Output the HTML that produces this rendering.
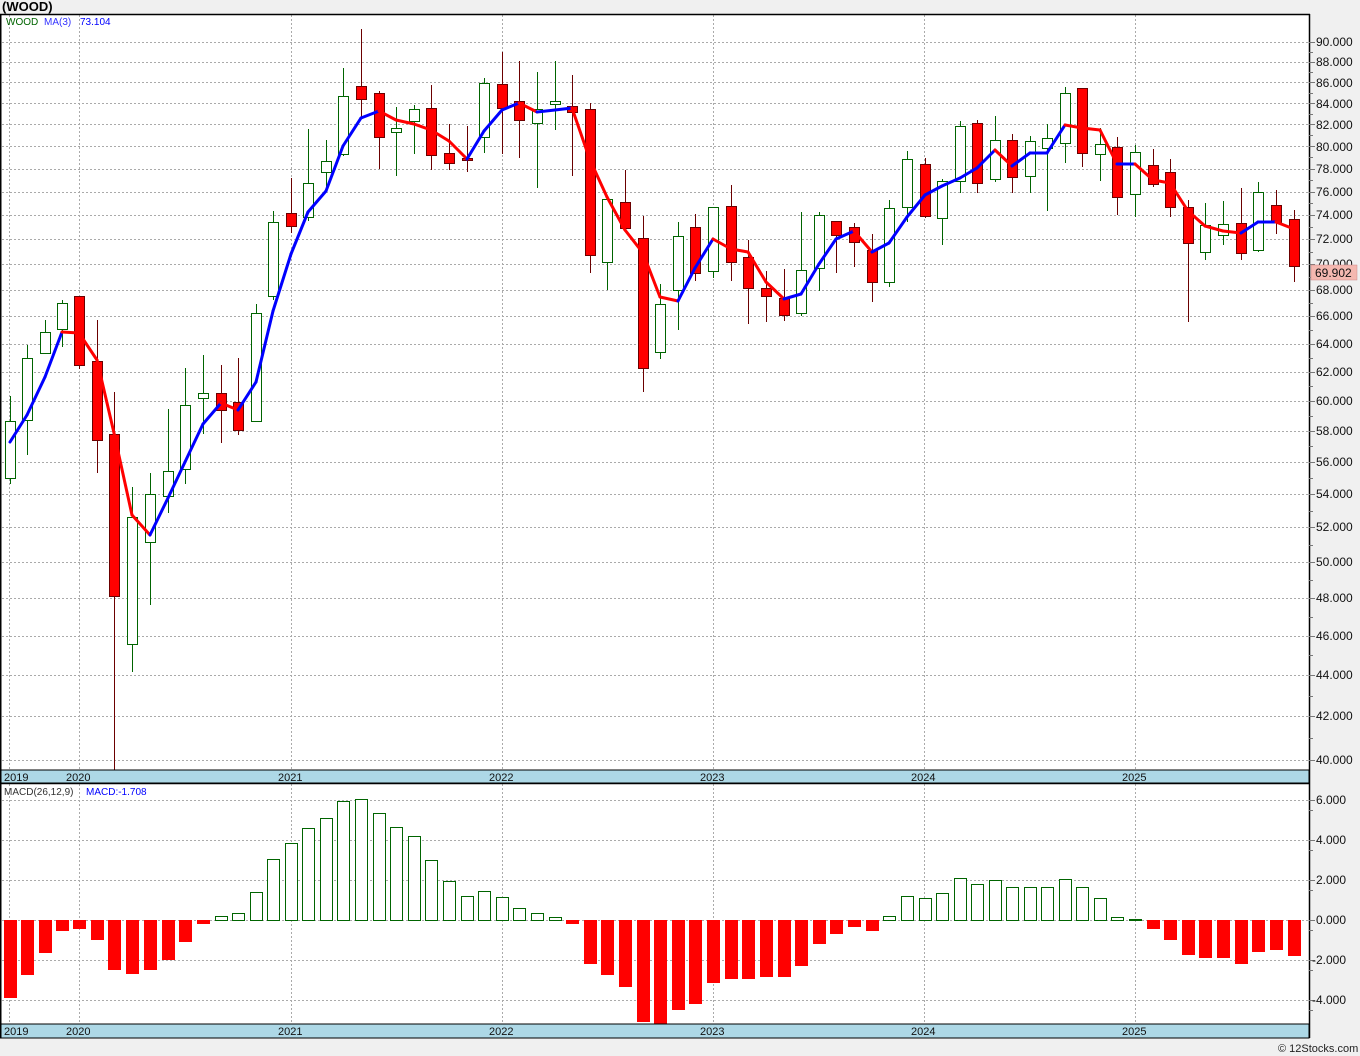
<!DOCTYPE html>
<html><head><meta charset="utf-8"><style>
html,body{margin:0;padding:0;background:#f0f0f0;}
body{width:1360px;height:1056px;position:relative;overflow:hidden;font-family:"Liberation Sans",sans-serif;}
svg{position:absolute;left:0;top:0;}
text{font-family:"Liberation Sans",sans-serif;font-size:12px;}
</style></head><body>
<svg id="s" width="1360" height="1056" xmlns="http://www.w3.org/2000/svg">
<rect x="0" y="14" width="1310" height="1024" fill="#fff"/>
<g id="grid" stroke="#aaa" stroke-dasharray="2,2" stroke-width="1"></g>
<g id="cand"></g>
<g id="ma" fill="none" stroke-width="3" stroke-linecap="round"></g>
<g id="macd"></g>
<rect x="0" y="770" width="1309" height="13" fill="#add8e6" stroke="#000" stroke-width="1"/>
<rect x="0" y="1024" width="1309" height="14" fill="#add8e6" stroke="#000" stroke-width="1"/>
<line x1="0.5" y1="14" x2="0.5" y2="1038" stroke="#000" stroke-width="2"/>
<line x1="0" y1="14.5" x2="1310" y2="14.5" stroke="#000" stroke-width="1.5"/>
<line x1="1309.5" y1="14" x2="1309.5" y2="1038" stroke="#000" stroke-width="1.5"/>
<line x1="0" y1="783.5" x2="1310" y2="783.5" stroke="#000" stroke-width="1.5"/>
<g id="ticks" stroke="#777"></g>
<text x="2" y="11" font-weight="bold" font-size="13" style="font-size:13px">(WOOD)</text>
<text x="6" y="25" fill="#006400" style="font-size:10px">WOOD</text>
<text x="44" y="25" fill="#3333ff" style="font-size:10px">MA(3)</text>
<text x="80" y="25" fill="#0000ff" style="font-size:10px">73.104</text>
<text x="4" y="795" fill="#333" style="font-size:10px">MACD(26,12,9)</text>
<text x="86" y="795" fill="#0000ff" style="font-size:10px">MACD:-1.708</text>
<g fill="#111" style="font-size:11px">
<text x="4" y="781" style="font-size:11px">2019</text><text x="66" y="781" style="font-size:11px">2020</text><text x="278" y="781" style="font-size:11px">2021</text><text x="489" y="781" style="font-size:11px">2022</text><text x="700" y="781" style="font-size:11px">2023</text><text x="911" y="781" style="font-size:11px">2024</text><text x="1122" y="781" style="font-size:11px">2025</text>
<text x="4" y="1035" style="font-size:11px">2019</text><text x="66" y="1035" style="font-size:11px">2020</text><text x="278" y="1035" style="font-size:11px">2021</text><text x="489" y="1035" style="font-size:11px">2022</text><text x="700" y="1035" style="font-size:11px">2023</text><text x="911" y="1035" style="font-size:11px">2024</text><text x="1122" y="1035" style="font-size:11px">2025</text>
</g>
<g id="plabels" fill="#111">
<text x="1316" y="46">90.000</text><text x="1316" y="66">88.000</text><text x="1316" y="87">86.000</text><text x="1316" y="108">84.000</text><text x="1316" y="129">82.000</text><text x="1316" y="151">80.000</text><text x="1316" y="173">78.000</text><text x="1316" y="196">76.000</text><text x="1316" y="219">74.000</text><text x="1316" y="243">72.000</text><text x="1316" y="268">70.000</text><text x="1316" y="294">68.000</text><text x="1316" y="320">66.000</text><text x="1316" y="348">64.000</text><text x="1316" y="376">62.000</text><text x="1316" y="405">60.000</text><text x="1316" y="435">58.000</text><text x="1316" y="466">56.000</text><text x="1316" y="498">54.000</text><text x="1316" y="531">52.000</text><text x="1316" y="566">50.000</text><text x="1316" y="602">48.000</text><text x="1316" y="640">46.000</text><text x="1316" y="679">44.000</text><text x="1316" y="720">42.000</text><text x="1316" y="764">40.000</text>
<text x="1316" y="804">6.000</text><text x="1316" y="844">4.000</text><text x="1316" y="884">2.000</text><text x="1316" y="924">0.000</text><text x="1312" y="964">-2.000</text><text x="1312" y="1004">-4.000</text>
</g>
<rect x="1311" y="265" width="46" height="15" fill="#f4b8b0" stroke="#c88" stroke-width="0.5"/>
<text x="1315" y="277" fill="#111">69.902</text>
<text x="1278" y="1052" fill="#222" style="font-size:11px">© 12Stocks.com</text>
</svg>
<script>
var NS="http://www.w3.org/2000/svg";
function el(p,t,a){var e=document.createElementNS(NS,t);for(var k in a)e.setAttribute(k,a[k]);p.appendChild(e);return e;}
var g=document.getElementById('grid'),tk=document.getElementById('ticks');
function py(p){return 42+885*Math.log(90/p);}
for(var p=40;p<=90;p+=2){var y=Math.round(py(p))+0.5;el(g,'line',{x1:2,y1:y,x2:1309,y2:y});el(tk,'line',{x1:1309,y1:y,x2:1315,y2:y});var y2=Math.round(py(p+1))+0.5;if(p<90)el(tk,'line',{x1:1309,y1:y2,x2:1313,y2:y2});}
for(var v=-4;v<=6;v+=2){var y=920-20*v+0.5;el(g,'line',{x1:2,y1:y,x2:1309,y2:y});el(tk,'line',{x1:1309,y1:y,x2:1315,y2:y});el(tk,'line',{x1:1309,y1:y+10,x2:1313,y2:y+10});}
[9,79,291,502,713,924,1135].forEach(function(x){el(g,'line',{x1:x+.5,y1:15,x2:x+.5,y2:770});el(g,'line',{x1:x+.5,y1:784,x2:x+.5,y2:1024});});
// x, wickTop, wickBot, bodyTop, bodyBot, red
var C=[[10,396,484,421,478,0],[27,345,455,358,420,0],[45,320,353,332,353,0],[62,300,347,303,329,0],[79,296,369,296,365,1],[97,320,473,361,440,1],[114,392,770,434,596,1],[132,487,672,517,644,0],[150,473,605,494,542,0],[168,409,513,471,496,0],[185,368,484,405,469,0],[203,355,434,393,398,0],[221,365,443,393,410,1],[238,358,435,402,430,1],[256,304,421,313,421,0],[273,211,300,222,296,0],[291,178,233,213,226,1],[308,129,221,183,217,0],[326,140,190,161,172,0],[343,68,156,96,154,0],[361,29,118,86,99,1],[379,91,169,93,137,1],[396,107,176,128,132,0],[414,105,154,109,121,0],[431,85,170,108,155,1],[449,124,170,153,163,1],[467,126,172,158,160,1],[484,78,153,83,137,0],[502,52,154,84,108,1],[519,61,158,101,120,1],[537,72,188,109,123,0],[555,61,130,101,104,0],[572,75,176,106,112,1],[590,103,273,109,255,1],[607,199,290,199,262,0],[625,170,232,202,228,1],[643,216,392,238,368,1],[660,284,359,304,352,0],[678,222,330,236,290,0],[695,214,281,227,273,1],[713,207,278,207,271,0],[731,185,281,206,262,1],[748,240,324,257,288,1],[766,271,322,288,296,1],[784,269,321,298,315,1],[801,212,316,270,313,0],[819,212,291,215,268,0],[836,221,273,221,235,1],[854,223,267,227,242,1],[872,234,302,250,282,1],[889,200,287,208,282,0],[907,151,222,159,207,0],[925,158,218,164,216,1],[942,179,245,181,218,0],[960,121,193,126,181,0],[977,120,193,123,183,1],[995,116,182,140,179,0],[1012,134,193,140,177,1],[1030,136,193,141,176,0],[1047,124,211,138,148,0],[1065,87,163,93,143,0],[1082,88,167,88,153,1],[1100,128,181,144,154,0],[1117,137,215,147,197,1],[1135,145,217,152,194,0],[1153,149,187,165,184,1],[1170,159,217,172,207,1],[1188,200,322,207,243,1],[1205,203,260,225,252,0],[1223,201,245,224,235,0],[1241,188,260,223,253,1],[1258,182,252,192,250,0],[1276,190,234,205,222,1],[1294,210,282,219,266,1]];
var cg=document.getElementById('cand');
C.forEach(function(c){var col=c[5]?'#6b0000':'#006400';
el(cg,'line',{x1:c[0]+.5,y1:c[1],x2:c[0]+.5,y2:c[2],stroke:col,'stroke-width':1});
el(cg,'rect',{x:c[0]-4.5,y:c[3]+.5,width:10,height:Math.max(c[4]-c[3],2),fill:c[5]?'#ff0000':'#fff',stroke:col,'stroke-width':1});});
var M=[[10,442],[27,415],[45,377],[62,332],[79,333],[97,360],[114,433],[132,515],[150,535],[168,498],[185,462],[203,424],[221,403],[238,410],[256,382],[273,311],[291,254],[308,212],[326,191],[343,146],[361,118],[379,111],[396,120],[414,124],[431,130],[449,141],[467,159],[484,131],[502,110],[519,103],[537,112],[555,110],[572,108],[590,160],[607,197],[625,230],[643,253],[660,297],[678,301],[695,268],[713,239],[731,249],[748,252],[766,282],[784,299],[801,294],[819,264],[836,239],[854,231],[872,252],[889,243],[907,217],[925,195],[942,186],[960,178],[977,168],[995,150],[1012,166],[1030,153],[1047,153],[1065,125],[1082,128],[1100,130],[1117,164],[1135,164],[1153,180],[1170,183],[1188,211],[1205,226],[1223,231],[1241,233],[1258,222],[1276,222],[1294,229]];
var mg=document.getElementById('ma');
for(var i=1;i<M.length;i++){el(mg,'line',{x1:M[i-1][0],y1:M[i-1][1],x2:M[i][0],y2:M[i][1],stroke:M[i][1]<=M[i-1][1]?'#0000ff':'#ff0000'});}
var H=[-78,-55,-33,-11,-9,-20,-50,-54,-50,-40,-22,-4,4,7,28,61,77,92,102,119,121,107,93,84,60,39,24,29,23,12,7,3,-4,-44,-55,-67,-102,-105,-90,-84,-63,-59,-59,-57,-57,-46,-24,-14,-7,-11,4,24,22,27,42,36,40,33,33,33,41,33,22,3,1,-9,-20,-35,-38,-38,-44,-32,-30,-36];
var hg=document.getElementById('macd');
H.forEach(function(h,i){var x=C[i][0];
if(h>=0)el(hg,'rect',{x:x-5.5,y:920.5-h,width:12,height:h,fill:'#fff',stroke:'#006400','stroke-width':1});
else el(hg,'rect',{x:x-6,y:920,width:13,height:-h,fill:'#ff0000'});});
</script>
</body></html>
